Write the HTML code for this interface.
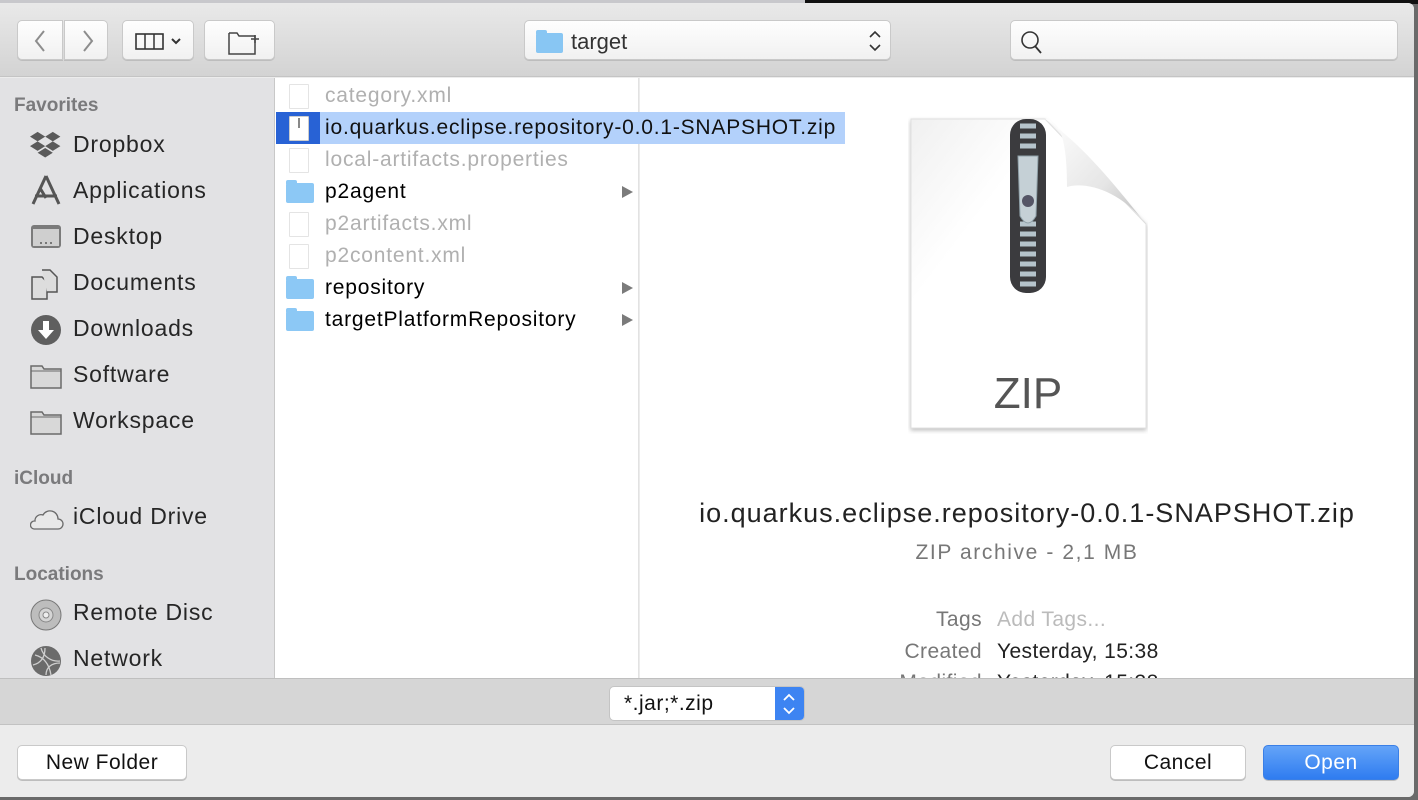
<!DOCTYPE html>
<html><head><meta charset="utf-8"><style>
*{box-sizing:border-box;margin:0;padding:0}
body{width:1418px;height:800px;overflow:hidden;background:#6a6a6a;font-family:"Liberation Sans",sans-serif;position:relative}
.topstrip{position:absolute;left:0;top:0;width:1418px;height:4px;background:#c8c8cc}
.topstrip .dk{position:absolute;left:805px;top:0;right:0;height:4px;background:#111}
.win{position:absolute;left:0;top:3px;width:1414px;height:794px;background:#ececec;border-radius:0 6px 6px 0;overflow:hidden}
.tb{position:absolute;left:0;top:0;width:100%;height:74px;background:linear-gradient(#e9e9e9,#d3d3d3);border-bottom:1px solid #c4c4c4}
.btn{position:absolute;background:linear-gradient(#fefefe,#f1f1f1);border:1px solid #c9c9c9;border-radius:5px;box-shadow:0 1px 0 #bdbdbd}
.side{position:absolute;left:0;top:75px;width:275px;height:600px;background:#e2e2e4;border-right:1px solid #c8c8c8}
.h{position:absolute;left:14px;font-size:19px;color:#7a7a7c;font-weight:bold}
.it{position:absolute;left:73px;font-size:23px;letter-spacing:.8px;color:#262626;white-space:nowrap}
.ic{position:absolute;left:30px}
.col{position:absolute;left:275px;top:75px;width:364px;height:600px;background:#fff;border-right:1px solid #e2e2e2}
.prev{position:absolute;left:640px;top:75px;width:774px;height:600px;background:#fff}
.rows{position:absolute;left:275px;top:75px;width:600px;height:600px}
.row{position:absolute;left:0;width:364px;height:32px;font-size:21px;letter-spacing:.8px;line-height:32px;white-space:nowrap}
.row span{position:absolute;left:50px}
.g{color:#b0b0b0}
.doc{position:absolute;left:14px;top:4px;width:20px;height:25px;border:1px solid #e4e4e4;border-radius:1px;background:#fff}
.fold{position:absolute;left:11px;top:7px;width:28px;height:20px;background:#8cc8f5;border-radius:2px}
.fold:before{content:"";position:absolute;left:0;top:-3px;width:11px;height:4px;background:#8cc8f5;border-radius:2px 2px 0 0}
.arr{position:absolute;left:347px;top:10px;width:0;height:0;border-left:11px solid #7b7b7b;border-top:6px solid transparent;border-bottom:6px solid transparent}
.bar{position:absolute;left:0;top:675px;width:100%;height:47px;background:#d6d6d6;border-top:1px solid #bfbfbf;border-bottom:1px solid #c2c2c2}
.foot{position:absolute;left:0;top:722px;width:100%;height:72px;background:#ececec}
.lbl{position:absolute;right:432px;font-size:21px;letter-spacing:.4px;color:#777}
.val{position:absolute;left:357px;font-size:21px;letter-spacing:.4px;color:#222}
</style></head><body>
<div class="topstrip"><div class="dk"></div></div>
<div class="win">
<div class="tb">
 <div class="btn" style="left:17px;top:17px;width:46px;height:40px;border-radius:5px 0 0 5px"><svg width="46" height="40"><path d="M26 10 L18 20 L26 30" stroke="#8d8d8d" stroke-width="2" fill="none"/></svg></div>
 <div class="btn" style="left:64px;top:17px;width:44px;height:40px;border-radius:0 5px 5px 0"><svg width="44" height="40"><path d="M19 10 L27 20 L19 30" stroke="#8d8d8d" stroke-width="2" fill="none"/></svg></div>
 <div class="btn" style="left:122px;top:17px;width:72px;height:40px"><svg width="72" height="40"><rect x="13" y="13" width="27" height="15" stroke="#333" stroke-width="1.6" fill="none"/><path d="M22 13v15M31 13v15" stroke="#333" stroke-width="1.5"/><path d="M49 18l4 4 4-4" stroke="#333" stroke-width="2" fill="none"/></svg></div>
 <div class="btn" style="left:204px;top:17px;width:71px;height:40px"><svg width="71" height="40"><path d="M24 12h8l2 3h16v2M24 12v21h26v-15" stroke="#444" stroke-width="1.5" fill="none"/><path d="M50 14v8M46 18h8" stroke="#444" stroke-width="1.5"/></svg></div>
 <div class="btn" style="left:524px;top:17px;width:367px;height:40px"><div style="position:absolute;left:11px;top:12px;width:27px;height:20px;background:#88c6f3;border-radius:2px"></div><div style="position:absolute;left:11px;top:9px;width:11px;height:4px;background:#88c6f3;border-radius:2px 2px 0 0"></div><span style="position:absolute;left:46px;top:8px;font-size:22px;color:#333">target</span><svg style="position:absolute;right:8px;top:8px" width="14" height="24"><path d="M2 8l5-5 5 5M2 16l5 5 5-5" stroke="#333" stroke-width="1.6" fill="none"/></svg></div>
 <div class="btn" style="left:1010px;top:17px;width:388px;height:40px"><svg width="40" height="40"><circle cx="19" cy="19" r="8" stroke="#333" stroke-width="1.6" fill="none"/><path d="M24 25l6 7" stroke="#333" stroke-width="1.8"/></svg></div>
</div>
<div class="side">
 <div class="h" style="top:17px">Favorites</div>
 <svg class="ic" style="top:52px" width="32" height="30"><path d="M8 2l8 5-8 5-8-5zM24 2l8 5-8 5-8-5zM8 12l8 5-8 5-8-5zM24 12l8 5-8 5-8-5zM16 19l8 5-8 5-8-5z" fill="#5a5a5a" transform="scale(.95)"/></svg><div class="it" style="top:53px">Dropbox</div>
 <svg class="ic" style="top:96px" width="32" height="32"><path d="M16 2L3 30M16 2l13 28M5 22h22M10 14l6 10" stroke="#555" stroke-width="3" fill="none"/></svg><div class="it" style="top:99px">Applications</div>
 <svg class="ic" style="top:146px" width="32" height="26"><rect x="1" y="1" width="30" height="23" rx="3" fill="#7b7b7b"/><rect x="3" y="5" width="26" height="17" fill="#cfcfcf"/><path d="M10 19h2M15 19h2M20 19h2" stroke="#777" stroke-width="2"/></svg><div class="it" style="top:145px">Desktop</div>
 <svg class="ic" style="top:190px" width="32" height="32"><path d="M2 9h10l5 5v17H2z" fill="#ddd" stroke="#555" stroke-width="1.5"/><path d="M12 2h8l7 7v15h-10" fill="#ddd" stroke="#555" stroke-width="1.5"/></svg><div class="it" style="top:191px">Documents</div>
 <svg class="ic" style="top:236px" width="32" height="32"><circle cx="16" cy="16" r="15" fill="#5f5f5f"/><path d="M13 7h6v9h5l-8 9-8-9h5z" fill="#fff"/></svg><div class="it" style="top:237px">Downloads</div>
 <svg class="ic" style="top:285px" width="32" height="26"><path d="M1 3h11l2 3h17v19H1z" fill="#d8d8d8" stroke="#6a6a6a" stroke-width="1.5"/><path d="M1 8h30" stroke="#6a6a6a" stroke-width="1"/></svg><div class="it" style="top:283px">Software</div>
 <svg class="ic" style="top:331px" width="32" height="26"><path d="M1 3h11l2 3h17v19H1z" fill="#d8d8d8" stroke="#6a6a6a" stroke-width="1.5"/><path d="M1 8h30" stroke="#6a6a6a" stroke-width="1"/></svg><div class="it" style="top:329px">Workspace</div>
 <div class="h" style="top:390px">iCloud</div>
 <svg class="ic" style="top:429px" width="34" height="24"><path d="M4 22h24a5 5 0 0 0 0-10 8 8 0 0 0-15-4 6 6 0 0 0-8 6 4 4 0 0 0-1 8z" fill="#e8e8e8" stroke="#6a6a6a" stroke-width="1.3"/></svg><div class="it" style="top:425px">iCloud Drive</div>
 <div class="h" style="top:486px">Locations</div>
 <svg class="ic" style="top:521px" width="32" height="32"><circle cx="16" cy="16" r="15" fill="#bdbdbd" stroke="#777"/><circle cx="16" cy="16" r="7" fill="#d5d5d5" stroke="#888"/><circle cx="16" cy="16" r="3" fill="#eee" stroke="#888"/></svg><div class="it" style="top:521px">Remote Disc</div>
 <svg class="ic" style="top:567px" width="32" height="32"><circle cx="16" cy="16" r="15" fill="#6b6b6b"/><path d="M5 10c8 2 14 8 16 20M11 3c2 8 10 14 19 13M3 20c8-2 12-8 12-17M16 30c0-8 6-12 14-12" stroke="#cfcfcf" stroke-width="1.3" fill="none"/></svg><div class="it" style="top:567px">Network</div>
</div>
<div class="col"></div>
<div class="prev">
 <svg style="position:absolute;left:268px;top:38px" width="240" height="318">
  <defs><linearGradient id="pg" x1="0" y1="0" x2="1" y2="1"><stop offset="0" stop-color="#f0f0f0"/><stop offset=".3" stop-color="#fff"/></linearGradient><linearGradient id="cg" x1="0" y1="0" x2="1" y2="1"><stop offset="0" stop-color="#fff"/><stop offset=".6" stop-color="#e6e6e6"/><stop offset="1" stop-color="#bbb"/></linearGradient></defs>
  <path d="M3 3H137L238 108V312H3Z" fill="url(#pg)" stroke="#e0e0e0" style="filter:drop-shadow(0 2px 2px rgba(0,0,0,.25))"/>
  <path d="M137 3c15 2 22 20 22 68 20-6 55 5 79 37C200 60 170 25 137 3z" fill="url(#cg)"/>
  <rect x="102" y="3" width="36" height="174" rx="16" fill="#3b3b3e"/>
  <path d="M112 10h16M112 20h16M112 30h16M112 108h16M112 118h16M112 128h16M112 138h16M112 148h16M112 158h16M112 168h16" stroke="#b6c4cc" stroke-width="5"/>
  <path d="M110 40h20l-2 60q-8 14-16 0z" fill="#c5d0d6" stroke="#8fa0a8"/>
  <circle cx="120" cy="85" r="6" fill="#556"/>
  <text x="120" y="292" text-anchor="middle" font-size="44" fill="#555" font-family="Liberation Sans">ZIP</text>
 </svg>
 <div style="position:absolute;left:0;width:774px;top:420px;text-align:center;font-size:27px;letter-spacing:1px;color:#222;white-space:nowrap">io.quarkus.eclipse.repository-0.0.1-SNAPSHOT.zip</div>
 <div style="position:absolute;left:0;width:774px;top:463px;text-align:center;font-size:21px;letter-spacing:1.6px;color:#777">ZIP archive - 2,1 MB</div>
 <div class="lbl" style="top:530px">Tags</div>
 <div class="val" style="top:530px;color:#bbb">Add Tags...</div>
 <div class="lbl" style="top:562px">Created</div>
 <div class="val" style="top:562px">Yesterday, 15:38</div>
 <div class="lbl" style="top:593px">Modified</div>
 <div class="val" style="top:593px">Yesterday, 15:38</div>
</div>
<div class="rows">
 <div class="row" style="top:2px"><div class="doc"></div><span class="g">category.xml</span></div>
 <div class="row" style="top:34px"><div style="position:absolute;left:1px;top:0;width:44px;height:32px;background:#2862d5"></div><div style="position:absolute;left:45px;top:0;width:525px;height:32px;background:#b3d1fb"></div><div class="doc" style="border-color:#ccc"></div><div style="position:absolute;left:23px;top:6px;width:2px;height:10px;background:#888"></div><span style="color:#111">io.quarkus.eclipse.repository-0.0.1-SNAPSHOT.zip</span></div>
 <div class="row" style="top:66px"><div class="doc"></div><span class="g">local-artifacts.properties</span></div>
 <div class="row" style="top:98px"><div class="fold"></div><span>p2agent</span><div class="arr"></div></div>
 <div class="row" style="top:130px"><div class="doc"></div><span class="g">p2artifacts.xml</span></div>
 <div class="row" style="top:162px"><div class="doc"></div><span class="g">p2content.xml</span></div>
 <div class="row" style="top:194px"><div class="fold"></div><span>repository</span><div class="arr"></div></div>
 <div class="row" style="top:226px"><div class="fold"></div><span>targetPlatformRepository</span><div class="arr"></div></div>
</div>
<div class="bar">
 <div style="position:absolute;left:609px;top:7px;width:196px;height:35px;background:#fff;border:1px solid #c4c4c4;border-radius:5px;overflow:hidden"><span style="position:absolute;left:14px;top:5px;font-size:21px;letter-spacing:.5px;color:#111">*.jar;*.zip</span><div style="position:absolute;right:0;top:0;width:29px;height:35px;background:#3d84f2"><svg width="29" height="35"><path d="M9 13l5-5 5 5M9 21l5 5 5-5" stroke="#fff" stroke-width="1.8" fill="none"/></svg></div></div>
</div>
<div class="foot">
 <div class="btn" style="left:17px;top:20px;width:170px;height:35px;background:#fff;text-align:center;font-size:21px;letter-spacing:.5px;line-height:33px;color:#111">New Folder</div>
 <div class="btn" style="left:1110px;top:20px;width:136px;height:35px;background:#fff;text-align:center;font-size:21px;letter-spacing:.5px;line-height:33px;color:#111">Cancel</div>
 <div class="btn" style="left:1263px;top:20px;width:136px;height:35px;background:linear-gradient(#64a4f8,#2f7cf0);border-color:#3a7fe6;text-align:center;font-size:21px;letter-spacing:.5px;line-height:33px;color:#fff">Open</div>
</div>
</div>
</body></html>
